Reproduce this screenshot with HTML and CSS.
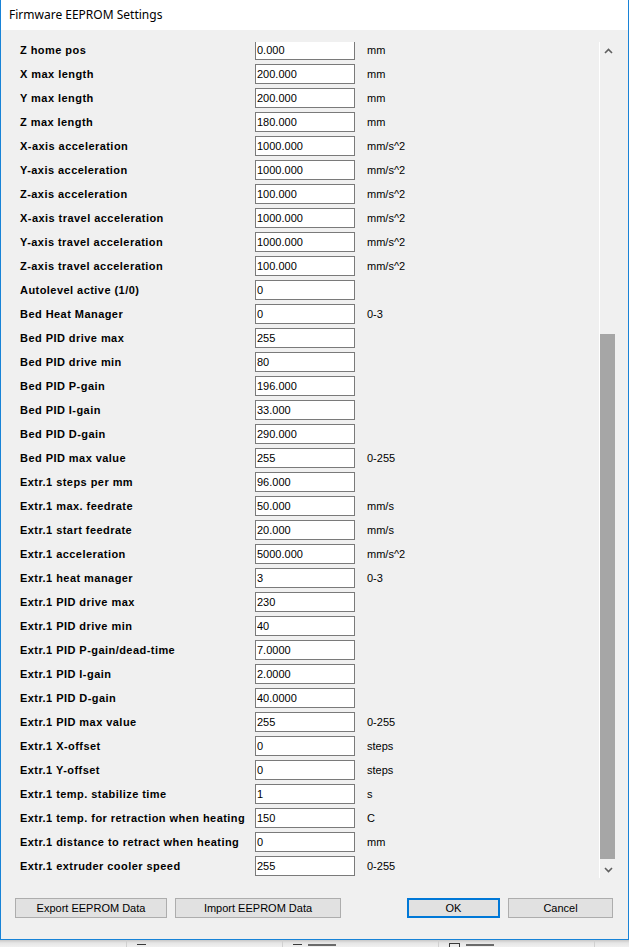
FILE: index.html
```html
<!DOCTYPE html>
<html lang="en">
<head>
  <meta charset="UTF-8">
  <meta name="viewport" content="width=device-width, initial-scale=1.0">
  <title>Firmware EEPROM Settings</title>
  <link rel="stylesheet" href="styles.css">
</head>
<body>
  <div class="window">
    <div class="titlebar">Firmware EEPROM Settings</div>

    <div class="content">
      <div class="scroller">
        <div class="viewport">
          <div class="rows">
            <div class="row"><span class="label">Z home pos</span><input class="field" value="0.000"><span class="unit">mm</span></div>
            <div class="row"><span class="label">X max length</span><input class="field" value="200.000"><span class="unit">mm</span></div>
            <div class="row"><span class="label">Y max length</span><input class="field" value="200.000"><span class="unit">mm</span></div>
            <div class="row"><span class="label">Z max length</span><input class="field" value="180.000"><span class="unit">mm</span></div>
            <div class="row"><span class="label">X-axis acceleration</span><input class="field" value="1000.000"><span class="unit">mm/s^2</span></div>
            <div class="row"><span class="label">Y-axis acceleration</span><input class="field" value="1000.000"><span class="unit">mm/s^2</span></div>
            <div class="row"><span class="label">Z-axis acceleration</span><input class="field" value="100.000"><span class="unit">mm/s^2</span></div>
            <div class="row"><span class="label">X-axis travel acceleration</span><input class="field" value="1000.000"><span class="unit">mm/s^2</span></div>
            <div class="row"><span class="label">Y-axis travel acceleration</span><input class="field" value="1000.000"><span class="unit">mm/s^2</span></div>
            <div class="row"><span class="label">Z-axis travel acceleration</span><input class="field" value="100.000"><span class="unit">mm/s^2</span></div>
            <div class="row"><span class="label">Autolevel active (1/0)</span><input class="field" value="0"><span class="unit"></span></div>
            <div class="row"><span class="label">Bed Heat Manager</span><input class="field" value="0"><span class="unit">0-3</span></div>
            <div class="row"><span class="label">Bed PID drive max</span><input class="field" value="255"><span class="unit"></span></div>
            <div class="row"><span class="label">Bed PID drive min</span><input class="field" value="80"><span class="unit"></span></div>
            <div class="row"><span class="label">Bed PID P-gain</span><input class="field" value="196.000"><span class="unit"></span></div>
            <div class="row"><span class="label">Bed PID I-gain</span><input class="field" value="33.000"><span class="unit"></span></div>
            <div class="row"><span class="label">Bed PID D-gain</span><input class="field" value="290.000"><span class="unit"></span></div>
            <div class="row"><span class="label">Bed PID max value</span><input class="field" value="255"><span class="unit">0-255</span></div>
            <div class="row"><span class="label">Extr.1 steps per mm</span><input class="field" value="96.000"><span class="unit"></span></div>
            <div class="row"><span class="label">Extr.1 max. feedrate</span><input class="field" value="50.000"><span class="unit">mm/s</span></div>
            <div class="row"><span class="label">Extr.1 start feedrate</span><input class="field" value="20.000"><span class="unit">mm/s</span></div>
            <div class="row"><span class="label">Extr.1 acceleration</span><input class="field" value="5000.000"><span class="unit">mm/s^2</span></div>
            <div class="row"><span class="label">Extr.1 heat manager</span><input class="field" value="3"><span class="unit">0-3</span></div>
            <div class="row"><span class="label">Extr.1 PID drive max</span><input class="field" value="230"><span class="unit"></span></div>
            <div class="row"><span class="label">Extr.1 PID drive min</span><input class="field" value="40"><span class="unit"></span></div>
            <div class="row"><span class="label">Extr.1 PID P-gain/dead-time</span><input class="field" value="7.0000"><span class="unit"></span></div>
            <div class="row"><span class="label">Extr.1 PID I-gain</span><input class="field" value="2.0000"><span class="unit"></span></div>
            <div class="row"><span class="label">Extr.1 PID D-gain</span><input class="field" value="40.0000"><span class="unit"></span></div>
            <div class="row"><span class="label">Extr.1 PID max value</span><input class="field" value="255"><span class="unit">0-255</span></div>
            <div class="row"><span class="label">Extr.1 X-offset</span><input class="field" value="0"><span class="unit">steps</span></div>
            <div class="row"><span class="label">Extr.1 Y-offset</span><input class="field" value="0"><span class="unit">steps</span></div>
            <div class="row"><span class="label">Extr.1 temp. stabilize time</span><input class="field" value="1"><span class="unit">s</span></div>
            <div class="row"><span class="label">Extr.1 temp. for retraction when heating</span><input class="field" value="150"><span class="unit">C</span></div>
            <div class="row"><span class="label">Extr.1 distance to retract when heating</span><input class="field" value="0"><span class="unit">mm</span></div>
            <div class="row"><span class="label">Extr.1 extruder cooler speed</span><input class="field" value="255"><span class="unit">0-255</span></div>
          </div>
        </div>

        <div class="scrollbar">
          <div class="arrow">
            <svg width="9" height="6" viewBox="0 0 9 6"><path d="M1 5 L4.5 1.5 L8 5" fill="none" stroke="#606060" stroke-width="1.6"/></svg>
          </div>
          <div class="track"><div class="thumb"></div></div>
          <div class="arrow">
            <svg width="9" height="6" viewBox="0 0 9 6"><path d="M1 1 L4.5 4.5 L8 1" fill="none" stroke="#606060" stroke-width="1.6"/></svg>
          </div>
        </div>
      </div>

      <div class="actions">
        <button class="btn btn-export">Export EEPROM Data</button>
        <button class="btn btn-import">Import EEPROM Data</button>
        <button class="btn btn-ok">OK</button>
        <button class="btn btn-cancel">Cancel</button>
      </div>
    </div>
  </div>

  <!-- window behind the dialog, mostly hidden -->
  <div class="behind">
    <div class="cell cell-a"></div>
    <div class="cell cell-b"><i class="tick"></i></div>
    <div class="cell cell-c"><i class="tick"></i><i class="dash"></i></div>
    <div class="cell cell-d"><i class="box"></i><i class="dash"></i></div>
    <div class="cell cell-e"></div>
  </div>
</body>
</html>
```

FILE: styles.css
```css
body {
  margin: 0;
  background: #f0f0f0;
  font-family: "Liberation Sans", Arial, sans-serif;
  overflow: hidden;
}

.window {
  width: 629px;
  height: 940px;
  box-sizing: border-box;
  border: 1px solid #1883d7;
  border-top: none;
  display: flex;
  flex-direction: column;
  background: #f0f0f0;
}

.titlebar {
  height: 30px;
  background: #fff;
  padding-left: 8px;
  font-family: "Noto Sans", "Liberation Sans", sans-serif;
  font-size: 12px;
  line-height: 30px;
  color: #000;
}

.content {
  flex: 1;
  display: flex;
  flex-direction: column;
  padding-top: 12px;
}

.scroller {
  height: 836px;
  display: flex;
  margin-right: 11px;
}

.viewport {
  flex: 1;
  overflow: hidden;
}

.rows {
  margin-top: -4px; /* scrolled a few pixels down */
  padding-left: 19px;
}

.row {
  height: 24px;
  display: flex;
  align-items: center;
}

.label {
  width: 235px;
  flex: none;
  font-size: 11px;
  font-weight: bold;
  letter-spacing: 0.45px;
  color: #000;
}

.field {
  width: 100px;
  height: 20px;
  box-sizing: border-box;
  border: 1px solid #7a7a7a;
  padding: 0 1px;
  margin: 0;
  background: #fff;
  font-family: "Liberation Sans", Arial, sans-serif;
  font-size: 11px;
  color: #000;
  outline: none;
}

.unit {
  margin-left: 12px;
  font-size: 11px;
  color: #000;
}

.scrollbar {
  width: 17px;
  border-left: 1px solid #fff;
  display: flex;
  flex-direction: column;
}

.arrow {
  height: 17px;
  display: flex;
  align-items: center;
  justify-content: center;
}

.track {
  flex: 1;
  padding-top: 275px;
}

.thumb {
  width: 15px;
  height: 525px;
  background: #a6a6a6;
}

.actions {
  display: flex;
  padding: 20px 15px 0 14px;
}

.btn {
  height: 20px;
  box-sizing: border-box;
  border: 1px solid #adadad;
  background: #e1e1e1;
  font-family: "Liberation Sans", Arial, sans-serif;
  font-size: 11px;
  color: #000;
  padding: 0;
}

.btn-export { width: 152px; }
.btn-import { width: 166px; margin-left: 8px; }
.btn-ok {
  width: 93px;
  margin-left: auto;
  border: 2px solid #0078d7;
}
.btn-cancel { width: 105px; margin-left: 8px; }

.behind {
  height: 7px;
  display: flex;
  background: linear-gradient(#c8c8c8, #e6e6e6 3px, #f0f0f0);
}

.cell {
  border-right: 1px solid #d0d0d0;
  display: flex;
  align-items: flex-end;
  gap: 6px;
  padding-left: 10px;
}

.cell-a { width: 117px; padding-left: 9px; }
.cell-b { width: 145px; }
.cell-c { width: 145px; }
.cell-d { width: 145px; }
.cell-e { flex: 1; border-right: none; }

.tick {
  width: 9px;
  height: 1px;
  margin-bottom: 2px;
  background: #3a3a3a;
}

.dash {
  width: 28px;
  height: 2px;
  margin-bottom: 1px;
  background: #6a6a6a;
}

.box {
  width: 9px;
  height: 3px;
  border: 1px solid #3a3a3a;
  border-bottom: none;
}
```
